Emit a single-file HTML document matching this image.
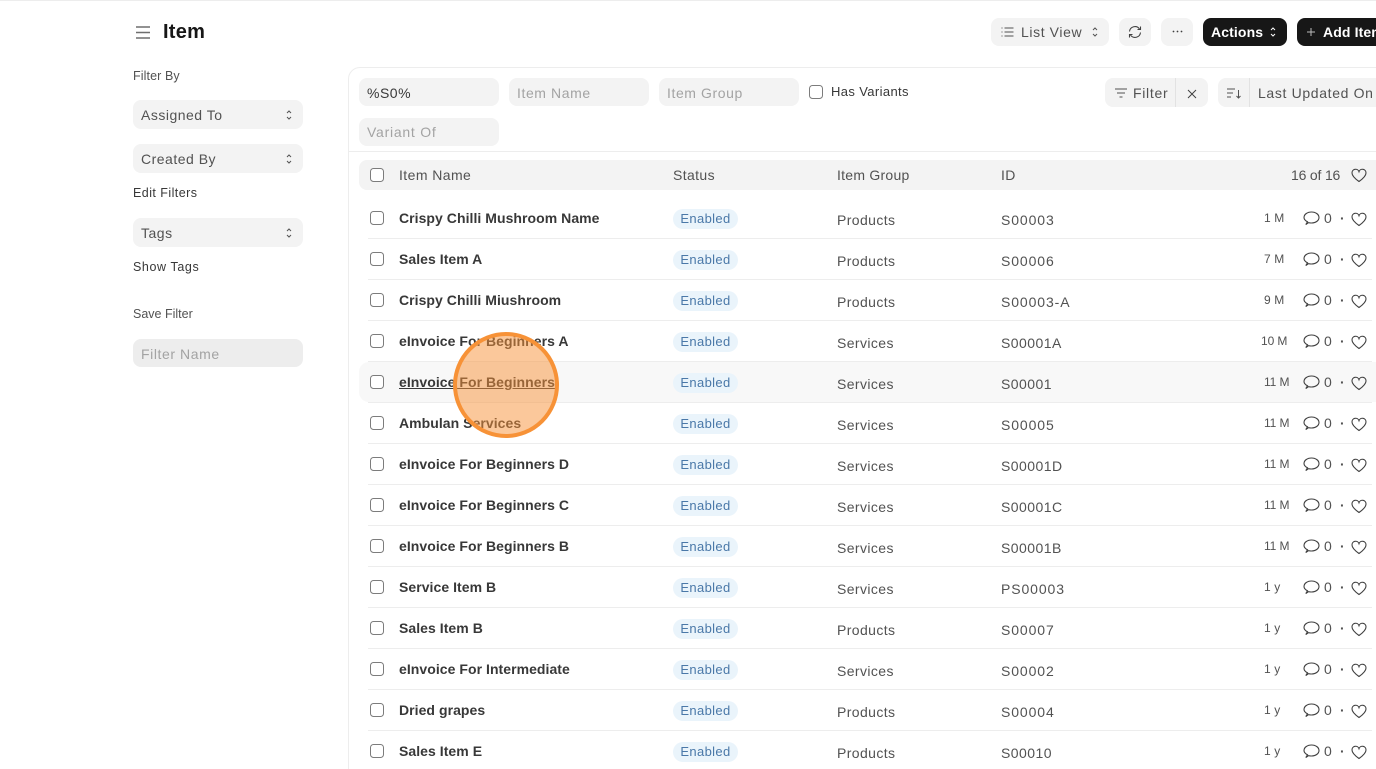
<!DOCTYPE html>
<html><head><meta charset="utf-8"><title>Item</title>
<style>
html,body{margin:0;padding:0;background:#fff;width:1376px;height:769px;overflow:hidden}
#w{position:absolute;left:0;top:0;width:1376px;height:769px;overflow:hidden;font-family:"Liberation Sans",sans-serif;color:#383838;font-size:14px}
.a,.t{position:absolute;white-space:nowrap}
.t{line-height:20px}
.g{background:#f3f3f3;border-radius:8px;position:absolute}
.sel{left:133px;width:170px;height:29px}
.lb{color:#525252;letter-spacing:.5px}
.hd{color:#525252;letter-spacing:.3px}
.ph{color:#a3a3a3;letter-spacing:.58px}
.small{font-size:12.5px;letter-spacing:.45px;color:#383838}
.cb{position:absolute;left:370px;width:12px;height:12px;border:1px solid #7c7c7c;border-radius:3.5px;background:#fff}
.row{position:absolute;left:359px;width:1040px;height:41px}
.row .line{position:absolute;left:9px;width:1004px;top:40px;height:1px;background:#ededed}
.row .cb{left:11px;top:13px}
.nm{left:40px;top:10px;font-weight:bold;color:#383838;letter-spacing:.05px}
.bd{position:absolute;left:314px;top:11px;width:65px;height:20px;border-radius:10px;background:#eaf4fb;color:#4a78a8;font-size:13px;line-height:19px;text-align:center;letter-spacing:.35px}
.gr{left:478px;top:12px;color:#525252;letter-spacing:.4px}
.id{left:642px;top:12px;color:#525252;letter-spacing:.9px}
.n1{letter-spacing:.45px}
.tm{left:905px;top:10px;font-size:12px;color:#525252;letter-spacing:.1px}
.zr{left:965px;top:10px;color:#525252;letter-spacing:.3px}
.dot{left:981px;top:10px;color:#525252;font-weight:bold}
.row svg{position:absolute}
.c{left:944px;top:13px}
.h{left:992px;top:14px}
.ws{color:#fff}
</style></head><body><div id="w">
<div class="a" style="left:0;top:0;width:1376px;height:1px;background:#ededed"></div>

<svg class="a" style="left:136px;top:26px" width="14" height="13" fill="none" stroke="#6f6f6f" stroke-width="1.4"><path d="M0 1h14M0 6.500h14M0 12h14"/></svg>
<div class="t" style="left:163px;top:20px;font-size:20px;line-height:24px;font-weight:bold;color:#171717;letter-spacing:.25px">Item</div>

<div class="g" style="left:991px;top:18px;width:118px;height:28px"></div>
<svg class="a" style="left:1001px;top:27px" width="13" height="10" fill="none" stroke="#525252"><path d="M3.500 1h9M3.500 5h9M3.500 9h9M.5 1h1M.5 5h1M.5 9h1"/></svg>
<div class="t lb" style="left:1021px;top:22px;letter-spacing:.6px">List View</div>
<svg class="a" style="left:1092px;top:26px" width="6" height="12" fill="none" stroke="#525252"><path d="M1 4l2-2 2 2M1 8l2 2 2-2"/></svg>
<div class="g" style="left:1119px;top:18px;width:32px;height:28px"></div>
<svg class="a" style="left:1127px;top:24px" width="16" height="16" fill="none" stroke="#404040" stroke-width="1.100"><path d="M2.500 7.500A5.500 5.500 0 0 1 12.500 5M13.500 8.500A5.500 5.500 0 0 1 3.500 11"/><path d="M13.500 2.500v3h-3M2.500 13.500v-3h3"/></svg>
<div class="g" style="left:1161px;top:18px;width:32px;height:28px"></div>
<svg class="a" style="left:1172px;top:30px" width="11" height="3" fill="#404040"><circle cx="1.500" cy="1.500" r=".9"/><circle cx="5.500" cy="1.500" r=".9"/><circle cx="9.500" cy="1.500" r=".9"/></svg>
<div class="a" style="left:1203px;top:18px;width:84px;height:28px;background:#171717;border-radius:8px"></div>
<div class="t ws" style="left:1211px;top:22px;font-weight:bold;letter-spacing:.12px">Actions</div>
<svg class="a" style="left:1270px;top:26px" width="6" height="12" fill="none" stroke="#fff"><path d="M1 4l2-2 2 2M1 8l2 2 2-2"/></svg>
<div class="a" style="left:1297px;top:18px;width:110px;height:28px;background:#171717;border-radius:8px"></div>
<svg class="a" style="left:1306px;top:27px" width="10" height="10" fill="none" stroke="#bbb"><path d="M5 1v8M1 5h8"/></svg>
<div class="t ws" style="left:1323px;top:22px;font-weight:bold;letter-spacing:.12px">Add Item</div>

<div class="t small" style="left:133px;top:66px;color:#525252;letter-spacing:.1px">Filter By</div>
<div class="g sel" style="top:100px"></div><div class="t lb" style="left:141px;top:105px">Assigned To</div>
<svg class="a" style="left:286px;top:109px" width="6" height="12" fill="none" stroke="#525252"><path d="M1 4l2-2 2 2M1 8l2 2 2-2"/></svg>
<div class="g sel" style="top:144px"></div><div class="t lb" style="left:141px;top:149px">Created By</div>
<svg class="a" style="left:286px;top:153px" width="6" height="12" fill="none" stroke="#525252"><path d="M1 4l2-2 2 2M1 8l2 2 2-2"/></svg>
<div class="t small" style="left:133px;top:183px">Edit Filters</div>
<div class="g sel" style="top:218px"></div><div class="t lb" style="left:141px;top:223px">Tags</div>
<svg class="a" style="left:286px;top:227px" width="6" height="12" fill="none" stroke="#525252"><path d="M1 4l2-2 2 2M1 8l2 2 2-2"/></svg>
<div class="t small" style="left:133px;top:257px;letter-spacing:.6px">Show Tags</div>
<div class="t small" style="left:133px;top:304px;color:#525252;letter-spacing:0">Save Filter</div>
<div class="g" style="left:133px;top:339px;width:170px;height:28px;background:#ededed"></div><div class="t ph" style="left:141px;top:344px">Filter Name</div>

<div class="a" style="left:348px;top:67px;width:1040px;height:720px;border:1px solid #ededed;border-radius:12px;box-sizing:border-box"></div>
<div class="g" style="left:359px;top:78px;width:140px;height:28px"></div><div class="t lb" style="left:367px;top:83px;color:#383838">%S0%</div>
<div class="g" style="left:509px;top:78px;width:140px;height:28px"></div><div class="t ph" style="left:517px;top:83px">Item Name</div>
<div class="g" style="left:659px;top:78px;width:140px;height:28px"></div><div class="t ph" style="left:667px;top:83px">Item Group</div>
<div class="cb" style="left:809px;top:85px"></div>
<div class="t" style="left:831px;top:82px;font-size:13px;letter-spacing:.37px">Has Variants</div>
<div class="g" style="left:359px;top:118px;width:140px;height:28px"></div><div class="t ph" style="left:367px;top:122px;letter-spacing:.75px">Variant Of</div>

<div class="g" style="left:1105px;top:78px;width:103px;height:29px"></div>
<div class="a" style="left:1175px;top:78px;width:1px;height:29px;background:#e2e2e2"></div>
<svg class="a" style="left:1114px;top:88px" width="14" height="10" fill="none" stroke="#525252"><path d="M1 1h12M3 5h8M5.500 9h3"/></svg>
<div class="t lb" style="left:1133px;top:83px;letter-spacing:.7px">Filter</div>
<svg class="a" style="left:1187px;top:89px" width="10" height="10" fill="none" stroke="#404040"><path d="M1 1l8 8M9 1l-8 8"/></svg>
<div class="g" style="left:1218px;top:78px;width:180px;height:29px"></div>
<div class="a" style="left:1249px;top:78px;width:1px;height:29px;background:#e2e2e2"></div>
<svg class="a" style="left:1227px;top:88px" width="15" height="11" fill="none" stroke="#525252"><path d="M0 1h8M0 5h6M0 9h4M11.500 2v8M9.500 8l2 2 2-2"/></svg>
<div class="t lb" style="left:1258px;top:83px;letter-spacing:.65px">Last Updated On</div>

<div class="a" style="left:349px;top:151px;width:1027px;height:1px;background:#ededed"></div>
<div class="g" style="left:359px;top:160px;width:1030px;height:30px"></div>
<div class="cb" style="top:168px"></div>
<div class="t hd" style="left:399px;top:165px;letter-spacing:.42px">Item Name</div>
<div class="t hd" style="left:673px;top:165px;letter-spacing:.38px">Status</div>
<div class="t hd" style="left:837px;top:165px;letter-spacing:.25px">Item Group</div>
<div class="t hd" style="left:1001px;top:165px">ID</div>
<div class="t" style="left:1291px;top:165px;color:#525252;letter-spacing:-.18px">16 of 16</div>
<svg class="a" style="left:1351px;top:168px" width="16" height="15" viewBox="0 0 16 15" fill="none" stroke="#404040" stroke-width="1.100"><path d="M8 13.500C3 10 1 7.500 1 5a3.600 3.600 0 0 1 7-1.300A3.600 3.600 0 0 1 15 5c0 2.500-2 5-7 8.500z"/></svg>

<div class="row" style="top:198px"><div class="line"></div><div class="cb"></div><div class="t nm">Crispy Chilli Mushroom Name</div><div class="bd">Enabled</div><div class="t gr">Products</div><div class="t id">S00003</div><div class="t tm">1 M</div><svg class="c" width="17" height="15" fill="none" stroke="#404040" stroke-width="1.100"><path d="M4.500 10.800C2.500 9.800 1 8.400 1 6.500 1 3.500 4.200 1 8.500 1S16 3.500 16 6.500 12.800 12 8.500 12c-1 0-2-.1-2.800-.4L2.800 13.500z"/></svg><div class="t zr">0</div><div class="t dot">·</div><svg class="h" width="16" height="15" viewBox="0 0 16 15" fill="none" stroke="#404040" stroke-width="1.100"><path d="M8 13.500C3 10 1 7.500 1 5a3.600 3.600 0 0 1 7-1.300A3.600 3.600 0 0 1 15 5c0 2.500-2 5-7 8.500z"/></svg></div>
<div class="row" style="top:239px"><div class="line"></div><div class="cb"></div><div class="t nm">Sales Item A</div><div class="bd">Enabled</div><div class="t gr">Products</div><div class="t id">S00006</div><div class="t tm">7 M</div><svg class="c" width="17" height="15" fill="none" stroke="#404040" stroke-width="1.100"><path d="M4.500 10.800C2.500 9.800 1 8.400 1 6.500 1 3.500 4.200 1 8.500 1S16 3.500 16 6.500 12.800 12 8.500 12c-1 0-2-.1-2.800-.4L2.800 13.500z"/></svg><div class="t zr">0</div><div class="t dot">·</div><svg class="h" width="16" height="15" viewBox="0 0 16 15" fill="none" stroke="#404040" stroke-width="1.100"><path d="M8 13.500C3 10 1 7.500 1 5a3.600 3.600 0 0 1 7-1.300A3.600 3.600 0 0 1 15 5c0 2.500-2 5-7 8.500z"/></svg></div>
<div class="row" style="top:280px"><div class="line"></div><div class="cb"></div><div class="t nm">Crispy Chilli Miushroom</div><div class="bd">Enabled</div><div class="t gr">Products</div><div class="t id">S00003-A</div><div class="t tm">9 M</div><svg class="c" width="17" height="15" fill="none" stroke="#404040" stroke-width="1.100"><path d="M4.500 10.800C2.500 9.800 1 8.400 1 6.500 1 3.500 4.200 1 8.500 1S16 3.500 16 6.500 12.800 12 8.500 12c-1 0-2-.1-2.800-.4L2.800 13.500z"/></svg><div class="t zr">0</div><div class="t dot">·</div><svg class="h" width="16" height="15" viewBox="0 0 16 15" fill="none" stroke="#404040" stroke-width="1.100"><path d="M8 13.500C3 10 1 7.500 1 5a3.600 3.600 0 0 1 7-1.300A3.600 3.600 0 0 1 15 5c0 2.500-2 5-7 8.500z"/></svg></div>
<div class="row" style="top:321px"><div class="line"></div><div class="cb"></div><div class="t nm">eInvoice For Beginners A</div><div class="bd">Enabled</div><div class="t gr">Services</div><div class="t id n1">S00001A</div><div class="t tm" style="left:902px;letter-spacing:-.1px">10 M</div><svg class="c" width="17" height="15" fill="none" stroke="#404040" stroke-width="1.100"><path d="M4.500 10.800C2.500 9.800 1 8.400 1 6.500 1 3.500 4.200 1 8.500 1S16 3.500 16 6.500 12.800 12 8.500 12c-1 0-2-.1-2.800-.4L2.800 13.500z"/></svg><div class="t zr">0</div><div class="t dot">·</div><svg class="h" width="16" height="15" viewBox="0 0 16 15" fill="none" stroke="#404040" stroke-width="1.100"><path d="M8 13.500C3 10 1 7.500 1 5a3.600 3.600 0 0 1 7-1.300A3.600 3.600 0 0 1 15 5c0 2.500-2 5-7 8.500z"/></svg></div>
<div class="row" style="top:362px;height:40px;background:#f8f8f8;border-radius:10px 0 0 10px"><div class="line"></div><div class="cb"></div><div class="t nm" style="text-decoration:underline">eInvoice For Beginners</div><div class="bd">Enabled</div><div class="t gr">Services</div><div class="t id n1">S00001</div><div class="t tm" style="letter-spacing:-.1px">11 M</div><svg class="c" width="17" height="15" fill="none" stroke="#404040" stroke-width="1.100"><path d="M4.500 10.800C2.500 9.800 1 8.400 1 6.500 1 3.500 4.200 1 8.500 1S16 3.500 16 6.500 12.800 12 8.500 12c-1 0-2-.1-2.800-.4L2.800 13.500z"/></svg><div class="t zr">0</div><div class="t dot">·</div><svg class="h" width="16" height="15" viewBox="0 0 16 15" fill="none" stroke="#404040" stroke-width="1.100"><path d="M8 13.500C3 10 1 7.500 1 5a3.600 3.600 0 0 1 7-1.300A3.600 3.600 0 0 1 15 5c0 2.500-2 5-7 8.500z"/></svg></div>
<div class="row" style="top:403px"><div class="line"></div><div class="cb"></div><div class="t nm">Ambulan Services</div><div class="bd">Enabled</div><div class="t gr">Services</div><div class="t id">S00005</div><div class="t tm" style="letter-spacing:-.1px">11 M</div><svg class="c" width="17" height="15" fill="none" stroke="#404040" stroke-width="1.100"><path d="M4.500 10.800C2.500 9.800 1 8.400 1 6.500 1 3.500 4.200 1 8.500 1S16 3.500 16 6.500 12.800 12 8.500 12c-1 0-2-.1-2.800-.4L2.800 13.500z"/></svg><div class="t zr">0</div><div class="t dot">·</div><svg class="h" width="16" height="15" viewBox="0 0 16 15" fill="none" stroke="#404040" stroke-width="1.100"><path d="M8 13.500C3 10 1 7.500 1 5a3.600 3.600 0 0 1 7-1.300A3.600 3.600 0 0 1 15 5c0 2.500-2 5-7 8.500z"/></svg></div>
<div class="row" style="top:444px"><div class="line"></div><div class="cb"></div><div class="t nm">eInvoice For Beginners D</div><div class="bd">Enabled</div><div class="t gr">Services</div><div class="t id n1">S00001D</div><div class="t tm" style="letter-spacing:-.1px">11 M</div><svg class="c" width="17" height="15" fill="none" stroke="#404040" stroke-width="1.100"><path d="M4.500 10.800C2.500 9.800 1 8.400 1 6.500 1 3.500 4.200 1 8.500 1S16 3.500 16 6.500 12.800 12 8.500 12c-1 0-2-.1-2.800-.4L2.800 13.500z"/></svg><div class="t zr">0</div><div class="t dot">·</div><svg class="h" width="16" height="15" viewBox="0 0 16 15" fill="none" stroke="#404040" stroke-width="1.100"><path d="M8 13.500C3 10 1 7.500 1 5a3.600 3.600 0 0 1 7-1.300A3.600 3.600 0 0 1 15 5c0 2.500-2 5-7 8.500z"/></svg></div>
<div class="row" style="top:485px"><div class="line"></div><div class="cb"></div><div class="t nm">eInvoice For Beginners C</div><div class="bd">Enabled</div><div class="t gr">Services</div><div class="t id n1">S00001C</div><div class="t tm" style="letter-spacing:-.1px">11 M</div><svg class="c" width="17" height="15" fill="none" stroke="#404040" stroke-width="1.100"><path d="M4.500 10.800C2.500 9.800 1 8.400 1 6.500 1 3.500 4.200 1 8.500 1S16 3.500 16 6.500 12.800 12 8.500 12c-1 0-2-.1-2.800-.4L2.800 13.500z"/></svg><div class="t zr">0</div><div class="t dot">·</div><svg class="h" width="16" height="15" viewBox="0 0 16 15" fill="none" stroke="#404040" stroke-width="1.100"><path d="M8 13.500C3 10 1 7.500 1 5a3.600 3.600 0 0 1 7-1.300A3.600 3.600 0 0 1 15 5c0 2.500-2 5-7 8.500z"/></svg></div>
<div class="row" style="top:526px"><div class="line"></div><div class="cb"></div><div class="t nm">eInvoice For Beginners B</div><div class="bd">Enabled</div><div class="t gr">Services</div><div class="t id n1">S00001B</div><div class="t tm" style="letter-spacing:-.1px">11 M</div><svg class="c" width="17" height="15" fill="none" stroke="#404040" stroke-width="1.100"><path d="M4.500 10.800C2.500 9.800 1 8.400 1 6.500 1 3.500 4.200 1 8.500 1S16 3.500 16 6.500 12.800 12 8.500 12c-1 0-2-.1-2.800-.4L2.800 13.500z"/></svg><div class="t zr">0</div><div class="t dot">·</div><svg class="h" width="16" height="15" viewBox="0 0 16 15" fill="none" stroke="#404040" stroke-width="1.100"><path d="M8 13.500C3 10 1 7.500 1 5a3.600 3.600 0 0 1 7-1.300A3.600 3.600 0 0 1 15 5c0 2.500-2 5-7 8.500z"/></svg></div>
<div class="row" style="top:567px"><div class="line"></div><div class="cb"></div><div class="t nm">Service Item B</div><div class="bd">Enabled</div><div class="t gr">Services</div><div class="t id">PS00003</div><div class="t tm">1 y</div><svg class="c" width="17" height="15" fill="none" stroke="#404040" stroke-width="1.100"><path d="M4.500 10.800C2.500 9.800 1 8.400 1 6.500 1 3.500 4.200 1 8.500 1S16 3.500 16 6.500 12.800 12 8.500 12c-1 0-2-.1-2.800-.4L2.800 13.500z"/></svg><div class="t zr">0</div><div class="t dot">·</div><svg class="h" width="16" height="15" viewBox="0 0 16 15" fill="none" stroke="#404040" stroke-width="1.100"><path d="M8 13.500C3 10 1 7.500 1 5a3.600 3.600 0 0 1 7-1.300A3.600 3.600 0 0 1 15 5c0 2.500-2 5-7 8.500z"/></svg></div>
<div class="row" style="top:608px"><div class="line"></div><div class="cb"></div><div class="t nm">Sales Item B</div><div class="bd">Enabled</div><div class="t gr">Products</div><div class="t id">S00007</div><div class="t tm">1 y</div><svg class="c" width="17" height="15" fill="none" stroke="#404040" stroke-width="1.100"><path d="M4.500 10.800C2.500 9.800 1 8.400 1 6.500 1 3.500 4.200 1 8.500 1S16 3.500 16 6.500 12.800 12 8.500 12c-1 0-2-.1-2.800-.4L2.800 13.500z"/></svg><div class="t zr">0</div><div class="t dot">·</div><svg class="h" width="16" height="15" viewBox="0 0 16 15" fill="none" stroke="#404040" stroke-width="1.100"><path d="M8 13.500C3 10 1 7.500 1 5a3.600 3.600 0 0 1 7-1.300A3.600 3.600 0 0 1 15 5c0 2.500-2 5-7 8.500z"/></svg></div>
<div class="row" style="top:649px"><div class="line"></div><div class="cb"></div><div class="t nm">eInvoice For Intermediate</div><div class="bd">Enabled</div><div class="t gr">Services</div><div class="t id">S00002</div><div class="t tm">1 y</div><svg class="c" width="17" height="15" fill="none" stroke="#404040" stroke-width="1.100"><path d="M4.500 10.800C2.500 9.800 1 8.400 1 6.500 1 3.500 4.200 1 8.500 1S16 3.500 16 6.500 12.800 12 8.500 12c-1 0-2-.1-2.800-.4L2.800 13.500z"/></svg><div class="t zr">0</div><div class="t dot">·</div><svg class="h" width="16" height="15" viewBox="0 0 16 15" fill="none" stroke="#404040" stroke-width="1.100"><path d="M8 13.500C3 10 1 7.500 1 5a3.600 3.600 0 0 1 7-1.300A3.600 3.600 0 0 1 15 5c0 2.500-2 5-7 8.500z"/></svg></div>
<div class="row" style="top:690px"><div class="line"></div><div class="cb"></div><div class="t nm">Dried grapes</div><div class="bd">Enabled</div><div class="t gr">Products</div><div class="t id">S00004</div><div class="t tm">1 y</div><svg class="c" width="17" height="15" fill="none" stroke="#404040" stroke-width="1.100"><path d="M4.500 10.800C2.500 9.800 1 8.400 1 6.500 1 3.500 4.200 1 8.500 1S16 3.500 16 6.500 12.800 12 8.500 12c-1 0-2-.1-2.800-.4L2.800 13.500z"/></svg><div class="t zr">0</div><div class="t dot">·</div><svg class="h" width="16" height="15" viewBox="0 0 16 15" fill="none" stroke="#404040" stroke-width="1.100"><path d="M8 13.500C3 10 1 7.500 1 5a3.600 3.600 0 0 1 7-1.300A3.600 3.600 0 0 1 15 5c0 2.500-2 5-7 8.500z"/></svg></div>
<div class="row" style="top:731px"><div class="cb"></div><div class="t nm">Sales Item E</div><div class="bd">Enabled</div><div class="t gr">Products</div><div class="t id n1">S00010</div><div class="t tm">1 y</div><svg class="c" width="17" height="15" fill="none" stroke="#404040" stroke-width="1.100"><path d="M4.500 10.800C2.500 9.800 1 8.400 1 6.500 1 3.500 4.200 1 8.500 1S16 3.500 16 6.500 12.800 12 8.500 12c-1 0-2-.1-2.800-.4L2.800 13.500z"/></svg><div class="t zr">0</div><div class="t dot">·</div><svg class="h" width="16" height="15" viewBox="0 0 16 15" fill="none" stroke="#404040" stroke-width="1.100"><path d="M8 13.500C3 10 1 7.500 1 5a3.600 3.600 0 0 1 7-1.300A3.600 3.600 0 0 1 15 5c0 2.500-2 5-7 8.500z"/></svg></div>

<div class="a" style="left:453px;top:332px;width:106px;height:106px;box-sizing:border-box;border-radius:50%;border:4px solid #f79237;background:rgba(248,146,55,.5)"></div>
</div></body></html>
